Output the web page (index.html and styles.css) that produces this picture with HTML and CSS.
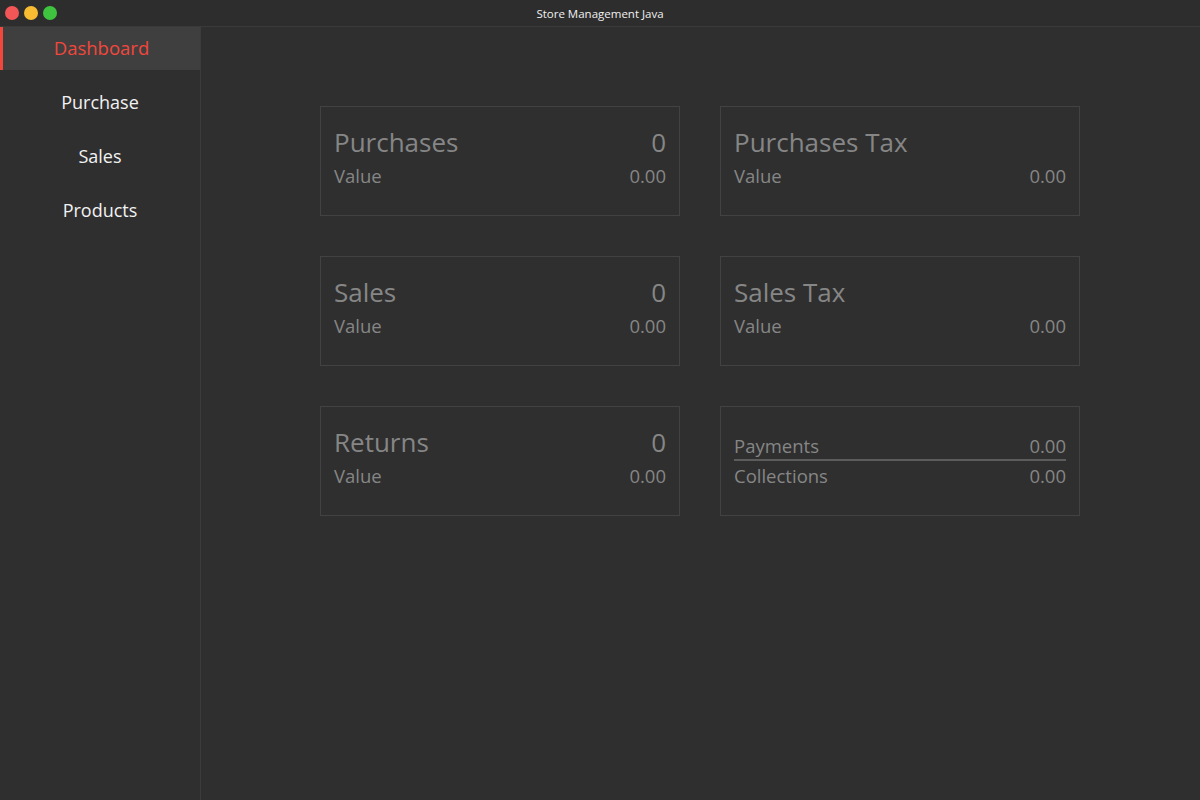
FILE: index.html
```html
<!DOCTYPE html>
<html>
<head>
<meta charset="utf-8">
<link rel="stylesheet" href="styles.css">
</head>
<body>
<div class="window">
  <div class="titlebar">
    <div class="lights">
      <span class="light red"></span>
      <span class="light yellow"></span>
      <span class="light green"></span>
    </div>
    <div class="title">Store Management Java</div>
  </div>
  <div class="main">
    <nav class="sidebar">
      <div class="nav-item active">Dashboard</div>
      <div class="nav-item">Purchase</div>
      <div class="nav-item">Sales</div>
      <div class="nav-item">Products</div>
    </nav>
    <section class="content">
      <div class="grid">
        <div class="card">
          <div class="row big"><span>Purchases</span><span>0</span></div>
          <div class="row small"><span>Value</span><span>0.00</span></div>
        </div>
        <div class="card">
          <div class="row big"><span>Purchases Tax</span><span></span></div>
          <div class="row small"><span>Value</span><span>0.00</span></div>
        </div>
        <div class="card">
          <div class="row big"><span>Sales</span><span>0</span></div>
          <div class="row small"><span>Value</span><span>0.00</span></div>
        </div>
        <div class="card">
          <div class="row big"><span>Sales Tax</span><span></span></div>
          <div class="row small"><span>Value</span><span>0.00</span></div>
        </div>
        <div class="card">
          <div class="row big"><span>Returns</span><span>0</span></div>
          <div class="row small"><span>Value</span><span>0.00</span></div>
        </div>
        <div class="card pay">
          <div class="row small payrow"><span>Payments</span><span>0.00</span></div>
          <div class="row small"><span>Collections</span><span>0.00</span></div>
        </div>
      </div>
    </section>
  </div>
</div>
</body>
</html>
```
FILE: styles.css
```css
* { box-sizing: border-box; }
html, body { margin: 0; padding: 0; }
body {
  width: 1200px;
  height: 800px;
  background: #2f2f2f;
  font-family: "Open Sans", "Noto Sans", sans-serif;
  overflow: hidden;
}
.window { display: flex; flex-direction: column; height: 800px; }
.titlebar {
  height: 27px;
  background: #2d2d2d;
  border-bottom: 1px solid #3a3a3a;
  position: relative;
  display: flex;
  align-items: center;
  justify-content: center;
  flex: none;
}
.lights {
  position: absolute;
  left: 5px;
  top: 6px;
  display: flex;
  gap: 5px;
}
.light { width: 14px; height: 14px; border-radius: 50%; display: block; }
.red { background: #f25656; }
.yellow { background: #f8bc32; }
.green { background: #3fc43f; }
.title {
  color: #f0f0f0;
  font-size: 11.5px;
  font-family: "Open Sans", sans-serif;
}
.main { flex: 1; display: flex; }
.sidebar {
  width: 201px;
  border-right: 1px solid #3c3c3c;
  background: #2f2f2f;
  display: flex;
  flex-direction: column;
  gap: 11px;
}
.nav-item {
  height: 43px;
  display: flex;
  align-items: center;
  justify-content: center;
  color: #f2f2f2;
  font-size: 18px;
  padding-bottom: 2px;
}
.nav-item.active {
  background: #3f3f3f;
  color: #f2473c;
  border-left: 3px solid #f2473c;
  font-size: 18.5px;
}
.content { flex: 1; padding: 79px 0 0 119px; }
.grid {
  display: grid;
  grid-template-columns: 360px 360px;
  grid-auto-rows: 110px;
  column-gap: 40px;
  row-gap: 40px;
}
.card {
  border: 1px solid #424242;
  padding: 17px 13px 0 13px;
  display: flex;
  flex-direction: column;
}
.row { display: flex; justify-content: space-between; color: #868686; }
.big { font-size: 26px; line-height: 36px; height: 36px; }
.small { font-size: 18.5px; line-height: 26px; margin-top: 3px; }
.pay { padding-top: 23px; }
.payrow { border-bottom: 2px solid #5c5c5c; line-height: 26px; margin-bottom: -1px; }
```
